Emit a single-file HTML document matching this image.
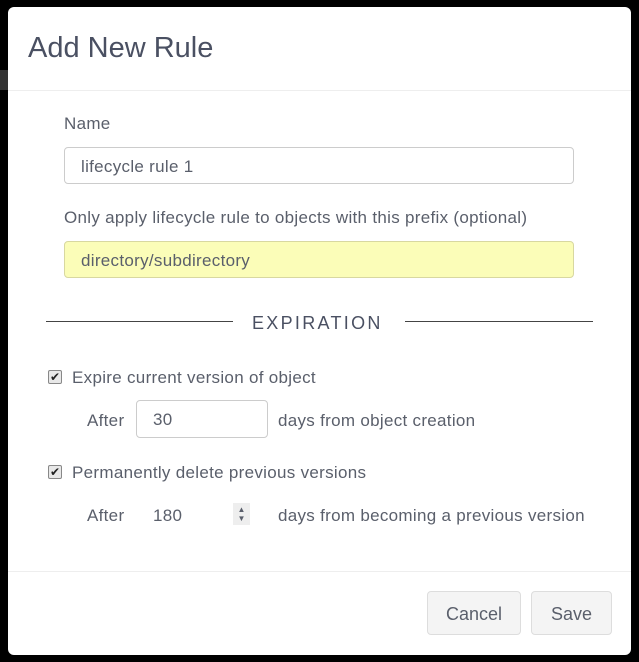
<!DOCTYPE html>
<html><head><style>
body{margin:0;width:639px;height:662px;background:#000;position:relative;font-family:"Liberation Sans",sans-serif;color:#5a5f6b;overflow:hidden}
.d{position:absolute;left:8px;top:7px;width:623px;height:648px;background:#fff;border-radius:6px}
.a{position:absolute;white-space:nowrap}
.t{font-size:17px;letter-spacing:0.3px}
.in{position:absolute;border:1px solid #ccc;border-radius:4px;box-sizing:border-box;font-size:17px;letter-spacing:0.3px;padding-left:16px;line-height:38px;color:#5a5f6b}
.cb{position:absolute;width:14px;height:14px;border:1px solid #888;border-radius:2px;background:#e8e8e8;box-sizing:border-box;font-size:12px;line-height:12px;text-align:center;color:#222}
.btn{position:absolute;top:591px;height:44px;border:1px solid #ddd;border-radius:4px;background:#f4f4f4;box-sizing:border-box;font-size:18px;line-height:44px;text-align:center;color:#5a5f6b}
</style></head><body>
<div class="a" style="left:0;top:70px;width:8px;height:20px;background:#333"></div>
<div class="d"></div>
<div class="a" style="left:28px;top:32px;font-size:29px;color:#4a5062">Add New Rule</div>
<div class="a" style="left:8px;top:90px;width:623px;height:1px;background:#eee"></div>
<div class="a t" style="left:64px;top:114px">Name</div>
<div class="in" style="left:64px;top:147px;width:510px;height:37px">lifecycle rule 1</div>
<div class="a t" style="left:64px;top:208px">Only apply lifecycle rule to objects with this prefix (optional)</div>
<div class="in" style="left:64px;top:241px;width:510px;height:37px;background:#fbfdb8;border-color:#d8d8a0">directory/subdirectory</div>
<div class="a" style="left:46px;top:321px;width:187px;height:1px;background:#444"></div>
<div class="a" style="left:405px;top:321px;width:188px;height:1px;background:#444"></div>
<div class="a" style="left:252px;top:313px;font-size:18px;letter-spacing:2.3px;color:#4a5062">EXPIRATION</div>
<div class="cb" style="left:48px;top:370px">✔</div>
<div class="a t" style="left:72px;top:368px">Expire current version of object</div>
<div class="a t" style="left:87px;top:411px">After</div>
<div class="in" style="left:136px;top:400px;width:132px;height:38px">30</div>
<div class="a t" style="left:278px;top:411px">days from object creation</div>
<div class="cb" style="left:48px;top:465px">✔</div>
<div class="a t" style="left:72px;top:463px">Permanently delete previous versions</div>
<div class="a t" style="left:87px;top:506px">After</div>
<div class="a t" style="left:153px;top:506px">180</div>
<div class="a" style="left:233px;top:503px;width:17px;height:22px;background:#eee;font-size:8px;line-height:9px;text-align:center;padding-top:2px;box-sizing:border-box">▲<br>▼</div>
<div class="a t" style="left:278px;top:506px">days from becoming a previous version</div>
<div class="a" style="left:8px;top:571px;width:623px;height:1px;background:#eee"></div>
<div class="btn" style="left:427px;width:94px">Cancel</div>
<div class="btn" style="left:531px;width:81px">Save</div>
</body></html>
